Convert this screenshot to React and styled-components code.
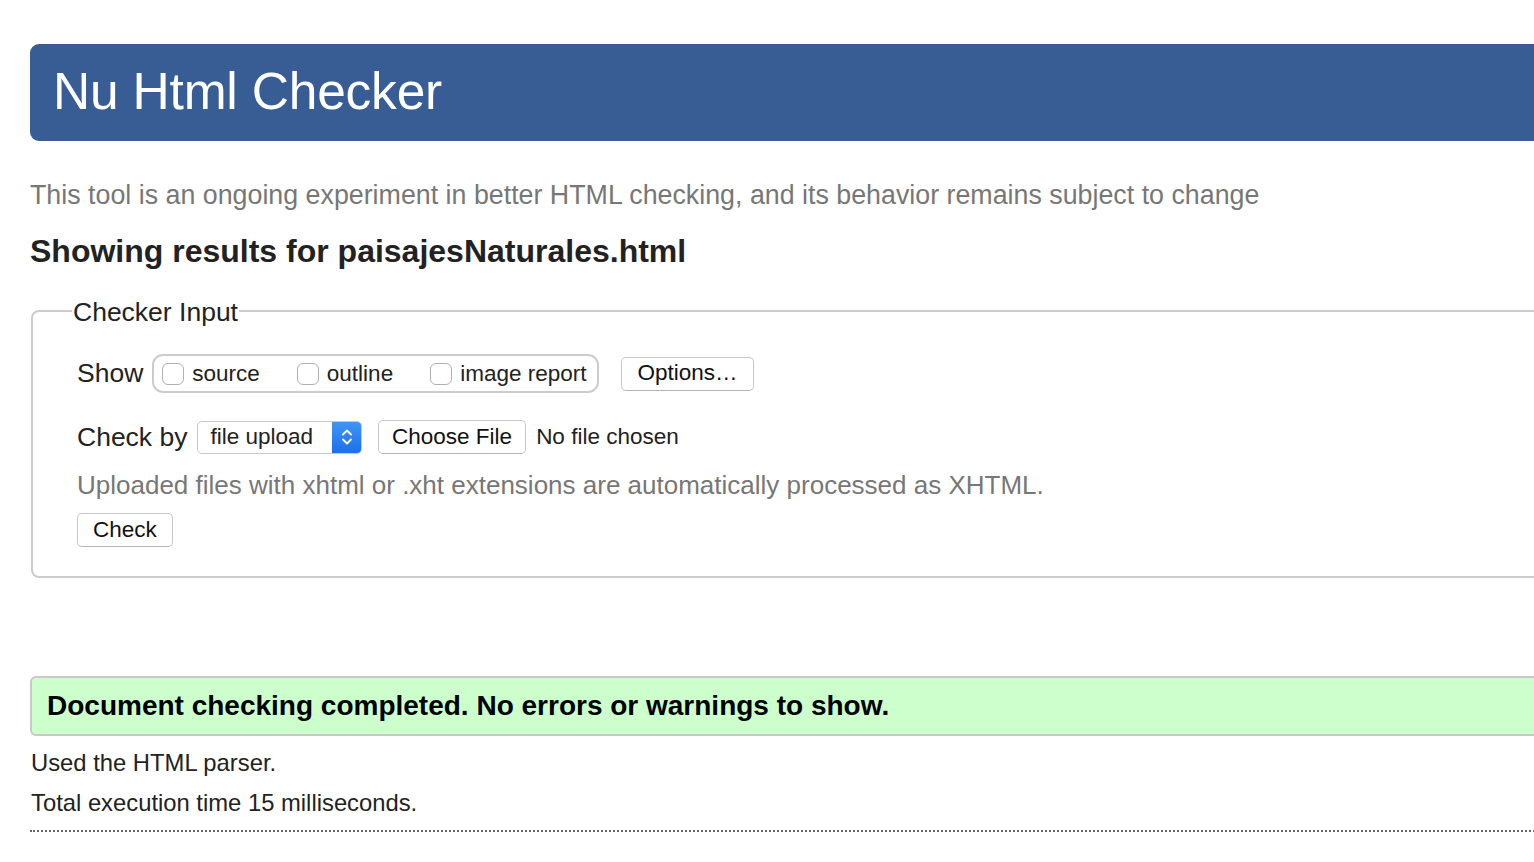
import React from "react"
import styled, { createGlobalStyle } from "styled-components"

const GlobalStyle = createGlobalStyle`
  html, body {
    margin: 0;
    padding: 0;
    background: #fff;
    overflow: hidden;
  }
  body {
    font-family: "Liberation Sans", Arial, Helvetica, sans-serif;
    color: #222;
  }
`

const Page = styled.div`
  width: 1600px;
  padding: 44px 0 0 30px;
`

const Header = styled.header`
  height: 97px;
  background: #375d94;
  border-radius: 9px;
  display: flex;
  align-items: center;
  padding: 0 0 4px 23px;
  box-sizing: border-box;
`

const Title = styled.h1`
  margin: 0;
  color: #fff;
  font-weight: 400;
  font-size: 51.5px;
  letter-spacing: -0.2px;
`

const Intro = styled.p`
  margin: 39px 0 0 0;
  color: #777;
  font-size: 26.8px;
  line-height: 30px;
`

const ResultsHeading = styled.h2`
  margin: 23px 0 0 0;
  font-size: 32px;
  line-height: 36px;
  font-weight: 700;
`

const Fieldset = styled.fieldset`
  margin: 24px 0 0 1px;
  border: 2px solid #ccc;
  border-radius: 8px;
  padding: 14px 0 29px 44px;
  min-width: 0;
`

const Legend = styled.legend`
  font-size: 26.5px;
  padding: 4px 1px 0;
  margin-left: -5px;
`

const Row = styled.div`
  display: flex;
  align-items: center;
  margin-top: ${(p) => p.top || 0}px;
`

const Label = styled.span`
  font-size: ${(p) => p.size || 26.5}px;
  margin-right: ${(p) => p.space || 0}px;
  margin-left: ${(p) => p.left || 0}px;
`

const ShowGroup = styled.div`
  display: flex;
  align-items: center;
  height: 39px;
  box-sizing: border-box;
  border: 2px solid #ccc;
  border-radius: 11px;
  padding: 0 11px 0 8px;
  gap: 37px;
`

const CheckItem = styled.label`
  display: flex;
  align-items: center;
  gap: 8px;
  font-size: 22.5px;
`

const Box = styled.span`
  width: 22px;
  height: 22px;
  border: 1.5px solid #b0b0b0;
  border-radius: 6px;
  background: #fff;
  box-sizing: border-box;
`

const Button = styled.button`
  font-family: inherit;
  font-size: 22.5px;
  color: #111;
  background: #fff;
  border: 1.5px solid #c8c8c8;
  border-bottom-color: #b5b5b5;
  border-radius: 5px;
  height: 34px;
  padding: 0 ${(p) => p.pad || 15}px;
  line-height: 1;
  margin-left: ${(p) => p.left || 0}px;
`

const Select = styled.div`
  display: flex;
  align-items: stretch;
  height: 33px;
  box-sizing: border-box;
  border: 1.5px solid #c8c8c8;
  border-radius: 5px;
  overflow: hidden;
  font-size: 22.5px;
  margin-left: 10px;
`

const SelectText = styled.span`
  display: flex;
  align-items: center;
  padding: 0 19px 0 12px;
`

const SelectArrows = styled.span`
  width: 29px;
  background: linear-gradient(#3f95f6, #1c70ec);
  display: flex;
  align-items: center;
  justify-content: center;
`

const Hint = styled.p`
  margin: 12px 0 0 0;
  color: #777;
  font-size: 26px;
  line-height: 38px;
`

const SuccessBox = styled.div`
  margin-top: 98px;
  height: 60px;
  box-sizing: border-box;
  background: #ccffcc;
  border: 2px solid #c8c8c8;
  border-radius: 6px;
  display: flex;
  align-items: center;
  padding-left: 15px;
`

const SuccessText = styled.strong`
  font-size: 28px;
  color: #000;
`

const Detail = styled.p`
  margin: ${(p) => p.top || 0}px 0 0 1px;
  font-size: 23.8px;
  line-height: 40px;
`

const Divider = styled.hr`
  margin: 7px 0 0 0;
  border: 0;
  border-top: 2px dotted #666;
  height: 0;
`

const Chevrons = () => (
  <svg width="12" height="20" viewBox="0 0 12 20">
    <path
      d="M2 7.5 L6 3.5 L10 7.5 M2 12.5 L6 16.5 L10 12.5"
      fill="none"
      stroke="#fff"
      strokeWidth="1.8"
      strokeLinecap="round"
      strokeLinejoin="round"
    />
  </svg>
)

export default function App() {
  return (
    <Page>
      <GlobalStyle />
      <Header>
        <Title>Nu Html Checker</Title>
      </Header>
      <Intro>
        This tool is an ongoing experiment in better HTML checking, and its
        behavior remains subject to change
      </Intro>
      <ResultsHeading>Showing results for paisajesNaturales.html</ResultsHeading>
      <Fieldset>
        <Legend>Checker Input</Legend>
        <Row top={12}>
          <Label space={9}>Show</Label>
          <ShowGroup>
            <CheckItem>
              <Box />
              source
            </CheckItem>
            <CheckItem>
              <Box />
              outline
            </CheckItem>
            <CheckItem>
              <Box />
              image report
            </CheckItem>
          </ShowGroup>
          <Button left={22}>Options…</Button>
        </Row>
        <Row top={27}>
          <Label>Check by</Label>
          <Select>
            <SelectText>file upload</SelectText>
            <SelectArrows>
              <Chevrons />
            </SelectArrows>
          </Select>
          <Button left={16} pad={13}>
            Choose File
          </Button>
          <Label size={22.5} left={10}>
            No file chosen
          </Label>
        </Row>
        <Hint>Uploaded files with xhtml or .xht extensions are automatically processed as XHTML.</Hint>
        <Row top={9}>
          <Button>Check</Button>
        </Row>
      </Fieldset>
      <SuccessBox>
        <SuccessText>Document checking completed. No errors or warnings to show.</SuccessText>
      </SuccessBox>
      <Detail top={7}>Used the HTML parser.</Detail>
      <Detail>Total execution time 15 milliseconds.</Detail>
      <Divider />
    </Page>
  )
}
